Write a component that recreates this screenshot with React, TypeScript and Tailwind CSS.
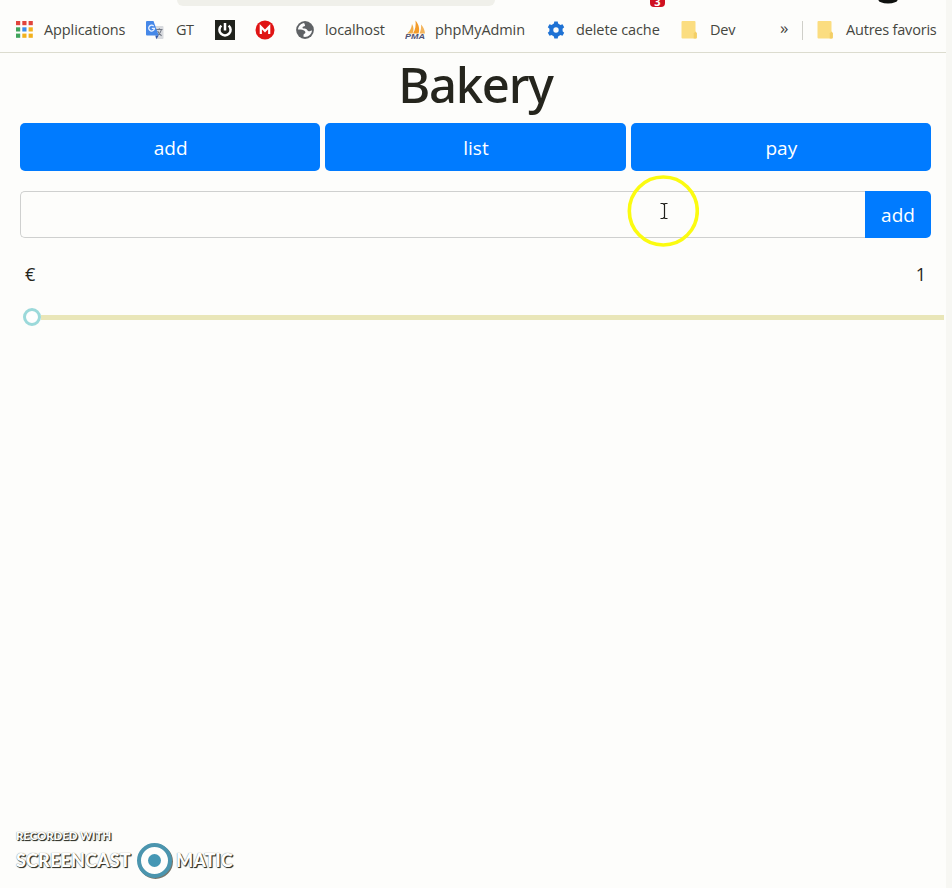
import type { ReactNode } from "react";

const APP_COLORS = [
  "#e0443c", "#e0443c", "#e0443c",
  "#3fa45b", "#3b8cea", "#f2b11d",
  "#3fa45b", "#f2b11d", "#f2b11d",
];

function AppsIcon() {
  return (
    <svg width="18" height="18" viewBox="0 0 18 18">
      {APP_COLORS.map((c, i) => (
        <rect key={i} x={(i % 3) * 6.3} y={Math.floor(i / 3) * 6.3} width="4.2" height="4.2" fill={c} />
      ))}
    </svg>
  );
}

function TranslateIcon() {
  return (
    <svg width="20" height="20" viewBox="0 0 20 20">
      <path d="M8 6h9.5a1 1 0 0 1 1 1v11a1 1 0 0 1-1 1h-6z" fill="#d8dade" />
      <path d="M11 9.5h6.5M14.3 8.3v1.2M16.5 9.5c-.6 2.8-2.2 4.6-4.2 6M12.6 11c.8 2 2.2 3.5 4 4.7" stroke="#737985" strokeWidth="1.1" fill="none" />
      <path d="M10.3 15.5h3.4l-2.4 3.8z" fill="#3457a8" />
      <path d="M2 1h6.5l5.2 14.5H2a1 1 0 0 1-1-1V2a1 1 0 0 1 1-1z" fill="#4688e8" />
      <path d="M8.7 6.1a2.9 2.9 0 1 0 .8 2.3H6.8" stroke="#e8f1ff" strokeWidth="1.3" fill="none" />
    </svg>
  );
}

function PowerIcon() {
  return (
    <svg width="20" height="20" viewBox="0 0 20 20">
      <rect width="20" height="20" fill="#20221c" />
      <path d="M6.4 5.6a5.6 5.6 0 1 0 7.2 0" stroke="#fff" strokeWidth="2.5" fill="none" />
      <path d="M10 3v7.5" stroke="#fff" strokeWidth="2.5" />
    </svg>
  );
}

function MegaIcon() {
  return (
    <svg width="20" height="20" viewBox="0 0 20 20">
      <circle cx="10" cy="10" r="9.5" fill="#e01414" />
      <path d="M5.8 14V6.7L10 11l4.2-4.3V14" stroke="#fff" strokeWidth="2.2" fill="none" />
    </svg>
  );
}

function GlobeIcon() {
  return (
    <svg width="20" height="20" viewBox="0 0 20 20">
      <circle cx="10" cy="10" r="8.9" fill="#5f6265" />
      <path d="M9.2 3.1C6 3.5 3.2 6.3 3 9.6c2.2.1 4-.1 5 .5 1.5.8 2.4 1 2.4 2.6-.1 1-1.9 1.1-1.9 2.300v1.800c4.600.8 8.200-2.600 8.500-6.300-1.600-.2-1.900 1-3.300.8-1.600-.3-1.300-2.300-3.100-2.500-1.400-.2-3.200.1-3.100-1.200.1-1.400 1.900-.8 2.500-1.800.4-.8-.8-1.400-.8-2.700z" fill="#fdfdfd" />
    </svg>
  );
}

function PmaIcon() {
  return (
    <svg width="22" height="20" viewBox="0 0 22 20">
      <path d="M2 13.500C5 11.500 6.500 8 7 4c2 3 1.800 7 .5 9.500z" fill="#f0ad4a" />
      <path d="M8 13.500C10.500 9.500 11 5 10.500.5c3.500 4 4.500 9 3 13z" fill="#f39a28" />
      <path d="M14.500 13.500c1.500-3 1.800-6 1.500-9 2.500 2.500 3.800 6 4 9z" fill="#f3b45c" />
      <text x="0" y="19.300" fontSize="7.500" fontWeight="800" fontStyle="italic" fontFamily="Liberation Sans, sans-serif" fill="#4d5175" textLength="20" lengthAdjust="spacingAndGlyphs">PMA</text>
    </svg>
  );
}

function GearIcon() {
  return (
    <svg width="18" height="18" viewBox="0 0 18 18">
      <circle cx="9" cy="9" r="4.700" stroke="#1f72d4" strokeWidth="4" fill="none" />
      {[0, 60, 120, 180, 240, 300].map((a) => (
        <path key={a} d="M6.700 3.500 7.300.5h3.400l.6 3z" fill="#1f72d4" transform={`rotate(${a} 9 9)`} />
      ))}
    </svg>
  );
}

function FolderIcon() {
  return (
    <svg width="17" height="20" viewBox="0 0 17 20">
      <path d="M1.500 1h12a1 1 0 0 1 1 1v9.500l1.300 1.800v4.200a1 1 0 0 1-1 1H1.500a1 1 0 0 1-1-1V2a1 1 0 0 1 1-1z" fill="#fbdd80" />
      <path d="M12.700 18.500v-5l1.800-2 1.300 1.800v4.200a1 1 0 0 1-1 1z" fill="#f3cf66" />
    </svg>
  );
}

function Bookmark({ icon, label, width, gap, tracking = "" }: { icon: ReactNode; label?: string; width: string; gap: string; tracking?: string }) {
  return (
    <div className={`flex shrink-0 items-center whitespace-nowrap ${width} ${gap}`}>
      <span className="shrink-0">{icon}</span>
      {label && <span className={tracking}>{label}</span>}
    </div>
  );
}

function BrowserBar() {
  return (
    <header className="h-[53px] border-b border-[#dcdccf]">
      <div className="flex h-2 items-start">
        <div className="ml-[177px] h-[6px] w-[318px] rounded-b-lg bg-[#f0f0ea]" />
        <div className="ml-[155px] flex h-[7px] w-[15px] items-end justify-center overflow-hidden rounded-b-sm bg-[#cf1020] text-[11px] leading-[10px] font-bold text-white">3</div>
        <svg className="ml-[213px]" width="20" height="4" viewBox="0 0 20 4">
          <ellipse cx="10" cy="-1" rx="10" ry="4.500" fill="#101210" />
        </svg>
      </div>
      <nav className="flex h-11 items-center pl-4 text-[14.5px] text-[#45463f]">
        <Bookmark icon={<AppsIcon />} label="Applications" width="w-[129px]" gap="gap-[10px]" tracking="tracking-[-0.1px]" />
        <Bookmark icon={<TranslateIcon />} label="GT" width="w-[70px]" gap="gap-[11px]" tracking="tracking-[-0.6px]" />
        <Bookmark icon={<PowerIcon />} width="w-10" gap="gap-0" />
        <Bookmark icon={<MegaIcon />} width="w-10" gap="gap-0" />
        <Bookmark icon={<GlobeIcon />} label="localhost" width="w-[110px]" gap="gap-[10px]" tracking="tracking-[-0.1px]" />
        <Bookmark icon={<PmaIcon />} label="phpMyAdmin" width="w-[142px]" gap="gap-[8px]" tracking="tracking-[-0.1px]" />
        <Bookmark icon={<GearIcon />} label="delete cache" width="w-[134px]" gap="gap-[11px]" tracking="tracking-[-0.1px]" />
        <Bookmark icon={<FolderIcon />} label="Dev" width="w-[99px]" gap="gap-[12px]" tracking="tracking-[-0.2px]" />
        <span className="w-[22px] shrink-0 pb-1 text-[17px] leading-5">»</span>
        <span className="mr-[14px] h-[19px] w-px shrink-0 bg-[#cfcfc9]" />
        <Bookmark icon={<FolderIcon />} label="Autres favoris" width="w-[125px]" gap="gap-[12px]" tracking="tracking-[-0.2px]" />
      </nav>
    </header>
  );
}

function Watermark() {
  return (
    <footer className="mt-auto ml-4 flex h-[59px] w-[230px] flex-col font-['Lato',sans-serif] font-black text-[#fefefe] [text-shadow:1px_1px_1px_#33342c,1px_1px_0_#55564a,0_0_1px_#66675a]">
      <span className="h-[12px] text-[11.5px] leading-[14px] tracking-[-0.1px]">RECORDED WITH</span>
      <div className="flex h-[38px] items-center text-[18px] leading-none">
        <span className="w-[119px] tracking-[0.15px]">SCREENCAST</span>
        <svg className="shrink-0" width="38" height="38" viewBox="0 0 38 38">
          <circle cx="20.500" cy="20.500" r="16" stroke="#77776c" strokeWidth="3" fill="none" />
          <circle cx="19.500" cy="19.500" r="15.500" stroke="#4b95ae" strokeWidth="4" fill="#fefefc" />
          <circle cx="19.500" cy="19.500" r="6.500" fill="#4597b4" />
        </svg>
        <span className="ml-[3px]">MATIC</span>
      </div>
    </footer>
  );
}

function PointerHighlight() {
  return (
    <svg className="pointer-events-none absolute top-[175px] left-[627px]" width="72" height="72" viewBox="0 0 72 72">
      <circle cx="36.300" cy="36" r="34" stroke="#fbfb10" strokeWidth="3.600" fill="none" />
      <path d="M33.500 28.500h2.500l1 1 1-1h2.500M33.500 43.500h2.500l1-1 1 1h2.500M37.500 29v14" stroke="#20201c" strokeWidth="1.200" fill="none" />
    </svg>
  );
}

export default function App() {
  return (
    <div className="relative flex h-[888px] w-[952px] flex-col overflow-hidden border-r-[6px] border-[#f7f7f3] bg-[#fdfdfb] font-['Open_Sans','Noto_Sans',sans-serif] text-[#25251d]">
      <BrowserBar />
      <main className="pl-5">
        <h1 className="flex h-[70px] w-[911px] items-center justify-center pb-[7px] font-['Noto_Sans',sans-serif] text-[49px] leading-none font-medium tracking-[-1.3px]">Bakery</h1>
        <div className="grid w-[911px] grid-cols-3 gap-[5px] text-[19px] text-white">
          {["add", "list", "pay"].map((label) => (
            <button key={label} className="h-12 rounded-[5px] bg-[#007bff] pt-[2px] pl-px">{label}</button>
          ))}
        </div>
        <form className="mt-5 flex h-[47px] w-[911px]">
          <input className="min-w-0 flex-1 rounded-l-[5px] border border-r-0 border-[#cfd0cf] bg-transparent px-4 outline-none" />
          <button type="button" className="w-[66px] rounded-r-[5px] bg-[#007bff] pt-[2px] text-[19px] text-white">add</button>
        </form>
        <div className="mt-[22px] flex h-[28px] w-[911px] items-center justify-between px-[5px] text-[18px]">
          <span>€</span>
          <span>1</span>
        </div>
        <div className="mt-[19px] flex h-5 items-center pl-[3px]">
          <span className="size-[18px] shrink-0 rounded-full border-[3px] border-[#9bd9da] bg-[#fefefe]" />
          <span className="h-[5px] w-[903px] shrink-0 bg-[#e9e6b8]" />
        </div>
      </main>
      <Watermark />
      <PointerHighlight />
    </div>
  );
}
